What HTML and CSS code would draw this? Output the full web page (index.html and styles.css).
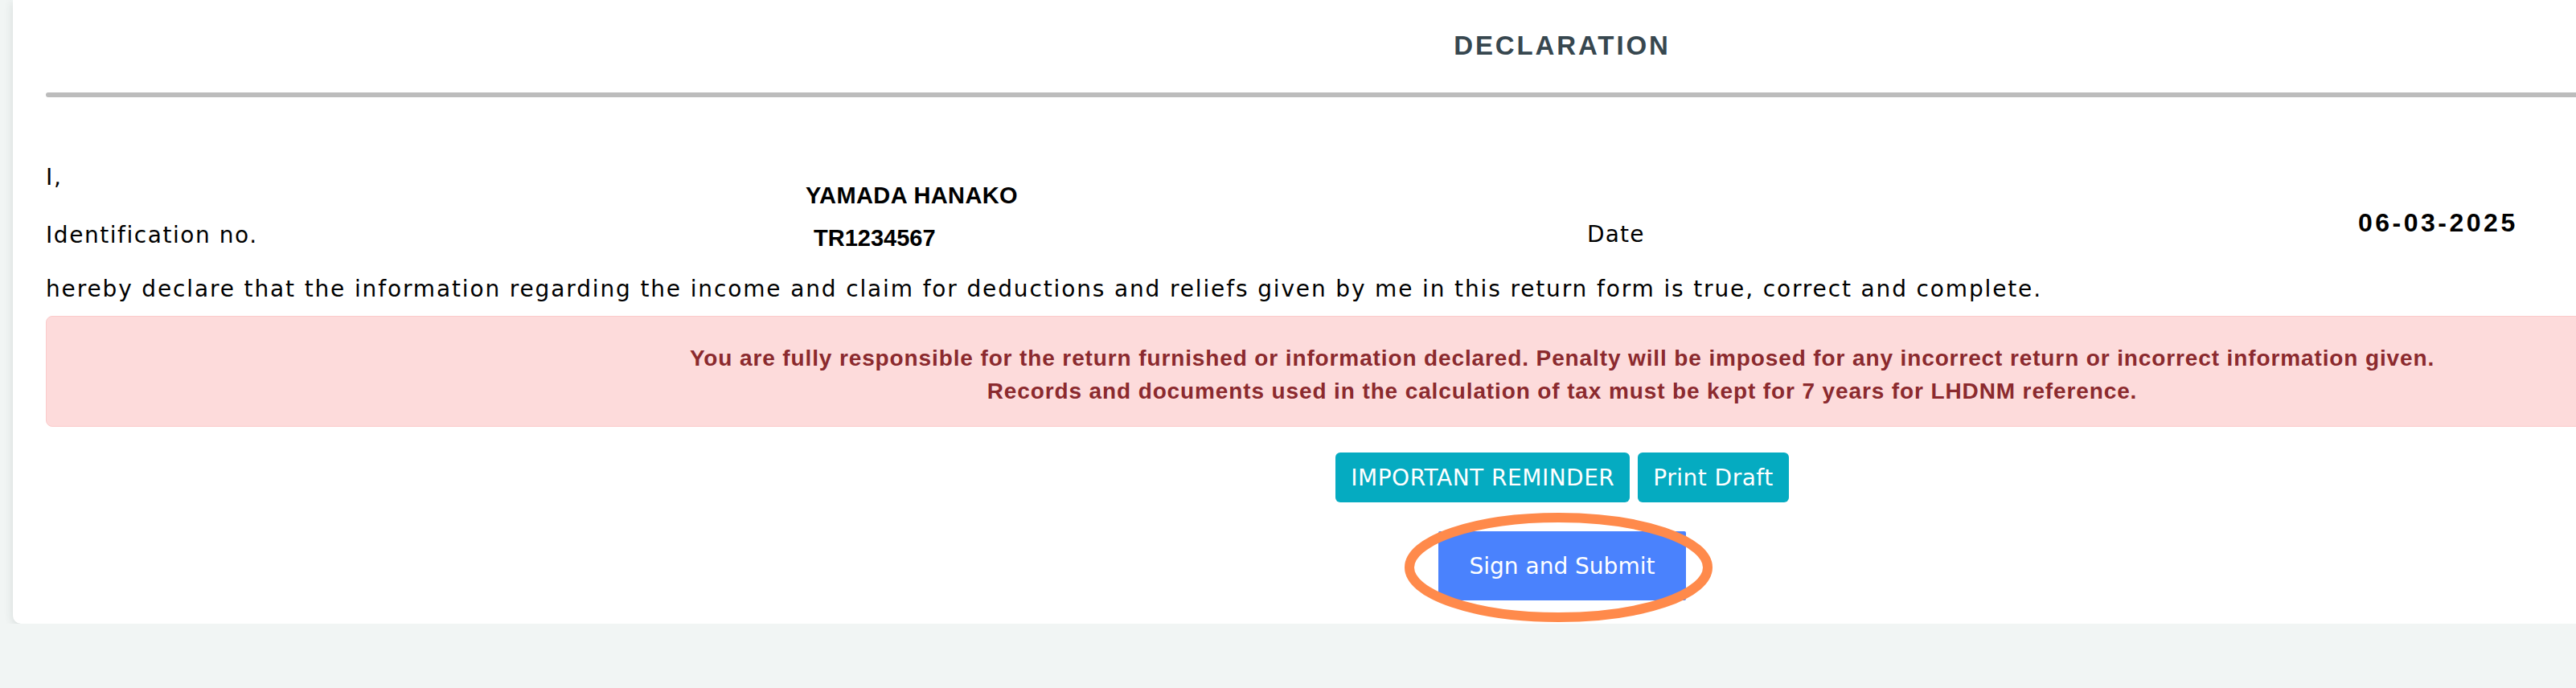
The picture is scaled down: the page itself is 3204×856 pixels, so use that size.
FILE: index.html
```html
<!DOCTYPE html>
<html lang="en">
<head>
  <meta charset="UTF-8" />
  <meta name="viewport" content="width=device-width, initial-scale=1.0" />
  <title>Declaration</title>
  <link rel="stylesheet" href="styles.css">
</head>
<body>
  <div class="card">
    <h2 class="title">DECLARATION</h2>
    <hr class="rule">

    <div class="decl-grid">
      <div class="cell txt cell-i">I,</div>
      <div class="cell strong cell-name">YAMADA HANAKO</div>
      <div class="cell txt cell-label">Identification no.</div>
      <div class="cell strong cell-id">TR1234567</div>
      <div class="cell txt cell-date-label">Date</div>
      <div class="cell cell-date">06-03-2025</div>
    </div>

    <p class="statement txt">hereby declare that the information regarding the income and claim for deductions and reliefs given by me in this return form is true, correct and complete.</p>

    <div class="alert">
      You are fully responsible for the return furnished or information declared. Penalty will be imposed for any incorrect return or incorrect information given.<br>
      Records and documents used in the calculation of tax must be kept for 7 years for LHDNM reference.
    </div>

    <div class="actions">
      <button class="btn btn-info">IMPORTANT REMINDER</button>
      <button class="btn btn-info">Print Draft</button>
    </div>

    <div class="submit-row">
      <span class="submit-wrap">
        <button class="btn btn-primary">Sign and Submit</button>
        <svg class="mark" width="383" height="136" viewBox="0 0 383 136">
          <ellipse cx="191.5" cy="68" rx="185.5" ry="62" fill="none" stroke="#ff8a4b" stroke-width="12" />
        </svg>
      </span>
    </div>
  </div>
</body>
</html>
```

FILE: styles.css
```css
html, body { overflow: hidden; }
body { margin: 0; background: #f1f5f4; color: #000; font-family: "DejaVu Sans", sans-serif; }

.card { width: 3772px; margin-left: 16px; padding: 37px 41px 29px; background: #fff; border-radius: 0 0 10px 10px; box-shadow: 0 3px 12px rgba(40, 60, 60, 0.14); }

.title { margin: 0; text-align: center; font: bold 33px/40px "Liberation Sans", Arial, sans-serif; letter-spacing: 2.9px; color: #37474f; }
.rule { margin: 38px 0 0; height: 6px; border: 0; border-radius: 3px; background: #bcbcbc; }

.txt { font-size: 28px; line-height: 40px; letter-spacing: 1.86px; }
.strong { font: bold 29px/40px "Liberation Sans", Arial, sans-serif; }

.decl-grid { display: grid; grid-template-columns: 945px 972px 959px auto; grid-template-rows: 62px auto; margin-top: 80px; }
.cell-i { grid-column: 1; grid-row: 1; }
.cell-name { grid-column: 2; grid-row: 1; margin-top: 22px; letter-spacing: 0.4px; }
.cell-label { grid-column: 1; grid-row: 2; margin-top: 10px; letter-spacing: 1.55px; }
.cell-id { grid-column: 2; grid-row: 2; margin-top: 13px; padding-left: 10px; }
.cell-date-label { grid-column: 3; grid-row: 2; margin-top: 9px; letter-spacing: 1.2px; }
.cell-date { grid-column: 4; grid-row: 1 / 3; margin-top: 56px; font: bold 32px/40px "Liberation Sans", Arial, sans-serif; letter-spacing: 3.5px; }

.statement { margin: 24px 0 0; }

.alert { margin-top: 13px; padding: 31px 40px 23px; background: #fddbdb; border: 1px solid #fbcaca; border-radius: 8px; text-align: center; color: #8b2a2e; font: bold 28px/41px "Liberation Sans", Arial, sans-serif; letter-spacing: 0.88px; }

.actions { display: flex; justify-content: center; gap: 10px; margin-top: 32px; }
.btn { border: 0; color: #fff; font-family: "DejaVu Sans", sans-serif; font-size: 28px; cursor: pointer; }
.btn-info { height: 62px; padding: 0 19px; background: #05abc1; border-radius: 6px; letter-spacing: 0.5px; }

.submit-row { display: flex; justify-content: center; margin-top: 36px; }
.submit-wrap { position: relative; display: inline-block; }
.btn-primary { display: block; height: 86px; padding: 0 39px; background: #4a82fd; border-radius: 2px; }
.mark { position: absolute; left: -42px; top: -23px; pointer-events: none; }
```
